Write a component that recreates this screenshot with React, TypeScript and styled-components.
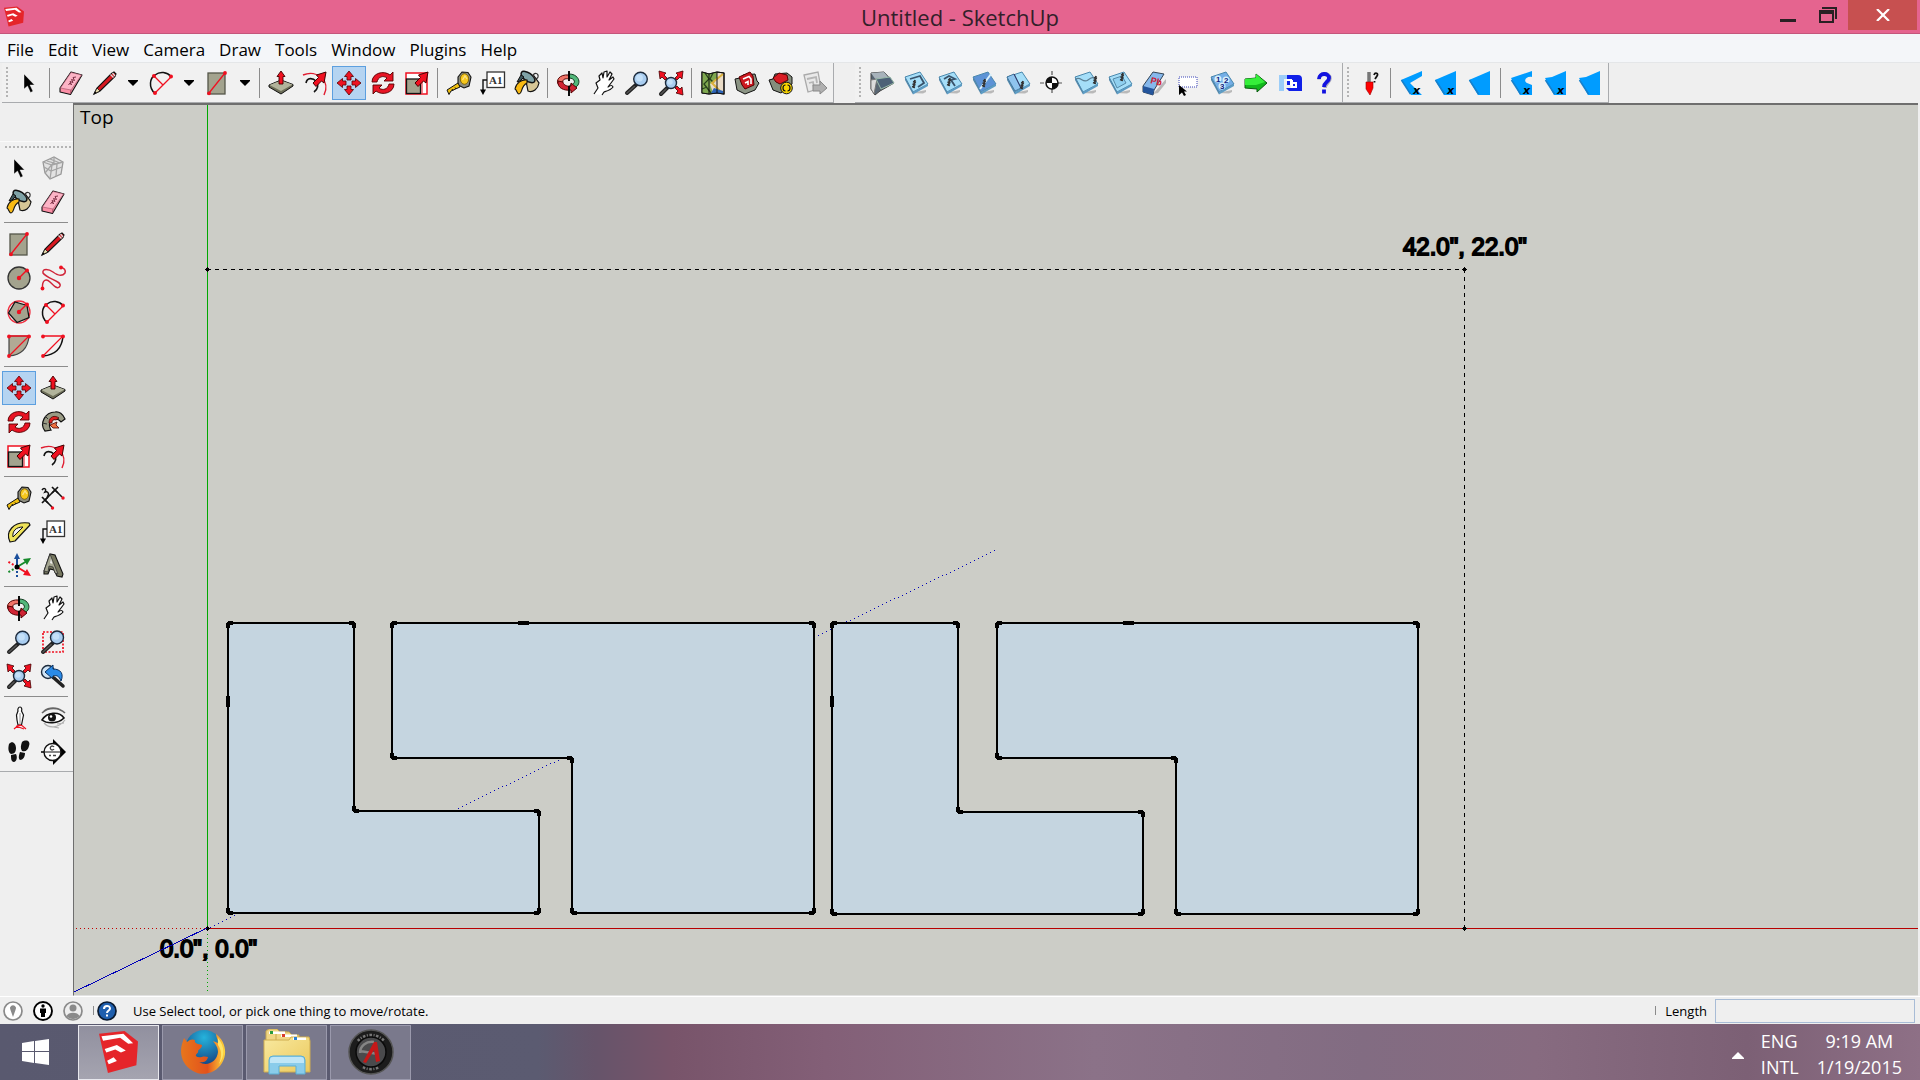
import React, { ReactNode } from "react";
import styled, { createGlobalStyle } from "styled-components";

const GlobalStyle = createGlobalStyle`
  * { box-sizing: border-box; }
  body { margin: 0; overflow: hidden; }
  button { font: inherit; color: inherit; border: 0; background: none; padding: 0; margin: 0; }
`;

const INK = "#111";
const RED = "#f01020";
const STONE = "#a3a38e";

/* ---------- drawings for the tool buttons, all on a 24 x 24 grid ---------- */

const lens = (cx: number, cy: number, r: number, hx: number, hy: number) => (
  <>
    <path d={`M${cx - r * 0.6} ${cy + r * 0.8}L${hx} ${hy}`} stroke="#222" strokeWidth="4" strokeLinecap="round" />
    <path d={`M${cx - r * 0.9} ${cy + r * 1.1}L${hx} ${hy}`} stroke="#555" strokeWidth="1.5" strokeLinecap="round" />
    <circle cx={cx} cy={cy} r={r} fill="#a9cdf0" stroke="#1c2a3c" strokeWidth="1.4" />
    <circle cx={cx - 1} cy={cy - 1} r={r * 0.5} fill="#c4e0f8" />
  </>
);

const bigArrow = <path d="M23 1L13.500 4L15.500 6.500L10 12L13 15.500L18.500 10L21 12Z" fill={RED} stroke="#400" strokeWidth="1" />;

const slab = (fill: string, detail: ReactNode) => (
  <>
    <path d="M7 22L22 19V21L19 22.500Z" fill="#b9b9b9" />
    <path d="M1 6L16 1L24 13L9 21Z" fill={fill} stroke="#4a88ad" strokeWidth="1" strokeLinejoin="round" />
    <path d="M1 6L9 21L9 23.500L1 9Z" fill="#4f86aa" />
    <path d="M9 21L24 13V15L9 23.500Z" fill="#5d9cc4" />
    {detail}
  </>
);
const screw = (x: number, y: number) => (
  <path d={`M${x} ${y}l-1.500 8M${x - 2} ${y + 1.5}l3 1M${x - 2.500} ${y + 4}l3 1M${x - 3} ${y + 6.5}l3 1`} stroke="#333" strokeWidth="1.8" fill="none" />
);
const SKY = "#a5def8";

const boldX = (
  <text x="13" y="23" fontFamily="'DejaVu Sans', sans-serif" fontWeight="bold" fontStyle="italic" fontSize="11" fill="#000">x</text>
);
const wedge = (d: string, x: boolean) => (
  <>
    <path d={d} fill="#009cff" />
    <path d="M1.500 9L10.500 23" stroke="#1580cc" strokeWidth="1.6" />
    {x && boldX}
  </>
);
const zoomArrows = (
  <path
    d="M0 0L7 2L5 4L8 7L6 9L3 6L1 8ZM24 0L17 2L19 4L16 7L18 9L21 6L23 8ZM24 24L17 22L19 20L16 17L18 15L21 18L23 16Z"
    fill={RED}
    stroke="#400"
    strokeWidth=".8"
  />
);
const sketchMark = (
  <>
    <path d="M0 1.500L15.700 0L24 6L23 19.500L5.500 24Z" fill="#e5252a" />
    <path d="M1.500 3L15 1.500L21 7L18 7.300L13 3.800L2.500 5.500ZM3.500 10.300L11 8L16.500 11.200L13.500 12.300L10 10.600L4.500 12.300ZM5 17L9 15L11 17.200L6 19Z" fill="#fff" />
  </>
);
const cross4 = "M12 0L16.500 5.500H14V9H10V5.500H7.500ZM12 24L16.500 18.500H14V15H10V18.500H7.500ZM0 12L5.500 7.500V10H9V14H5.500V16.500ZM24 12L18.500 7.500V10H15V14H18.500V16.500Z";

const DRAWINGS = {
  select: <path d="M7 3V18L10.500 15L13.500 21.500L16 20.300L13 14H17.500Z" fill="#000" stroke="#fff" strokeWidth=".4" />,
  eraser: (
    <>
      <path d="M1 17L12 1L23 4L11.500 23.500L1 21Z" fill="#fb8fa6" stroke={INK} strokeWidth="1.1" strokeLinejoin="round" />
      <path d="M1.500 17L12 1.500L22.500 4L12 19Z" fill="#fcb4c6" stroke="#a05064" strokeWidth=".6" />
      <path d="M12 19L11.500 23" stroke="#a05064" />
      <path d="M9.500 14L11 12L12.500 14L11 10.500L14 11.500L12.500 8.500L15.500 9.500L14 6.500L17 6" stroke="#7c3045" fill="none" />
    </>
  ),
  pencil: (
    <>
      <path d="M1 23L4 17L18.500 2.500L21 1L23 3L22 5.500L7 20Z" fill="#d81820" stroke={INK} strokeWidth="1.100" />
      <path d="M1 23L4 17L7 20Z" fill="#eadfb0" stroke={INK} strokeWidth=".8" />
      <path d="M1 23L2 20.500L3.500 21.800Z" fill="#000" />
      <path d="M17.500 3.500L20.500 6.500M19.500 2L22 5" stroke="#ddd" strokeWidth="1.200" />
    </>
  ),
  arc: (
    <>
      <path d="M6 22.500C-1 16 1 7 6 4C11 0 18 1 22 5.500" fill="none" stroke={INK} strokeWidth="1.500" />
      <path d="M5 5L14 14M6 22L22 6" stroke={RED} strokeWidth="1.300" />
      <g fill={RED}><circle cx="5" cy="5" r="2" /><circle cx="22" cy="5.500" r="2" /><circle cx="6" cy="22" r="2" /></g>
    </>
  ),
  rect: (
    <>
      <rect x="3" y="2" width="17" height="21" fill={STONE} stroke="#55564a" strokeWidth="1.300" />
      <path d="M4 22L20 2" stroke={RED} strokeWidth="1.300" />
      <circle cx="4" cy="22.300" r="1.900" fill={RED} /><circle cx="20" cy="2" r="1.900" fill={RED} />
    </>
  ),
  circle: (
    <>
      <circle cx="12" cy="12" r="11" fill={STONE} stroke="#333" strokeWidth="1.300" />
      <path d="M12 12L20 4" stroke={RED} strokeWidth="1.500" />
      <circle cx="12" cy="12" r="2.200" fill={RED} /><circle cx="20" cy="4.500" r="2" fill={RED} />
    </>
  ),
  polygon: (
    <>
      <circle cx="12" cy="12" r="11" fill="none" stroke="#f03040" strokeWidth="1.300" />
      <path d="M1.500 13L8 2L20 5.500L22 17.500L10 22.500Z" fill={STONE} stroke={INK} strokeWidth="1.300" />
      <path d="M12 12L20 4" stroke={RED} strokeWidth="1.500" />
      <circle cx="12" cy="12" r="2.200" fill={RED} /><circle cx="20" cy="4.500" r="2" fill={RED} />
    </>
  ),
  freehand: (
    <>
      <path d="M1.500 22C1 14 5 12 9 16C13 20 17 24 19 20C21 15 6 13 2 7C1 2 8 3 12 6C16 9 21 11 24 7C25 4 23 2 20 1.500" fill="none" stroke="#d02438" strokeWidth="1.500" />
      <circle cx="1.500" cy="22.500" r="1.900" fill={RED} /><circle cx="20" cy="1.500" r="1.900" fill={RED} />
    </>
  ),
  pie: (
    <>
      <path d="M2 2H22C21 14 14 21 2 22Z" fill="#b1aa95" stroke="#444" strokeWidth="1.200" />
      <path d="M2 2H22L2 22" fill="none" stroke={RED} strokeWidth="1.300" />
      <g fill={RED}><circle cx="2" cy="2.500" r="1.900" /><circle cx="22" cy="2.500" r="1.900" /><circle cx="2" cy="22" r="1.900" /></g>
    </>
  ),
  arc2: (
    <>
      <path d="M22 2C21 14 14 21 2 22" fill="none" stroke={INK} strokeWidth="1.500" />
      <path d="M2 2H22L2 22" fill="none" stroke={RED} strokeWidth="1.300" />
      <g fill={RED}><circle cx="2" cy="2.500" r="1.900" /><circle cx="22" cy="2.500" r="1.900" /><circle cx="2" cy="22" r="1.900" /></g>
    </>
  ),
  pushpull: (
    <>
      <path d="M0 14L12 9L24 13.500V15L12 23L0 16Z" fill="#6d6e58" stroke={INK} strokeWidth="1" />
      <path d="M0.500 14L12 9.500L23.500 13.500L12 20Z" fill="#b2b49c" />
      <path d="M12 0L16 5.500H14V13H10V5.500H8Z" fill={RED} stroke="#400" strokeWidth=".9" />
    </>
  ),
  offset: (
    <>
      <path d="M0 4C14-2 28 10 21 24" fill="none" stroke="#e01c30" strokeWidth="1.500" />
      <path d="M3 12C4 6 10 7 13 10C16 14 15 18 11 21" fill="none" stroke={INK} strokeWidth="1.600" />
      {bigArrow}
    </>
  ),
  move: <path d={cross4} fill="#ee1322" stroke="#500" strokeWidth=".8" />,
  rotate: (
    <>
      <path d="M1 11C1 2 13-1 19 4L22 1V10H13L16 7C12 4 7 6 6 11ZM23 13C23 22 11 25 5 20L2 23V14H11L8 17C12 20 17 18 18 13Z" fill="#e81424" stroke="#500" strokeWidth=".9" />
    </>
  ),
  scale: (
    <>
      <rect x="1" y="2" width="21" height="21" fill="#fff" stroke={RED} strokeWidth="1.500" />
      <path d="M17 9V22" stroke={RED} strokeWidth="1" />
      <rect x="1.500" y="8" width="14" height="14.500" fill={STONE} stroke={INK} strokeWidth="1.300" />
      {bigArrow}
    </>
  ),
  tape: (
    <>
      <path d="M11 6L15 1L21 1.500L24 6L22 15L17 17L11 14Z" fill="#8d8d80" stroke={INK} strokeWidth="1.100" />
      <ellipse cx="17.500" cy="8" rx="4.200" ry="5.300" fill="#f6c71c" stroke="#6e5600" strokeWidth=".8" />
      <path d="M15.500 9L18 5L20 8" fill="none" stroke="#fbe38a" strokeWidth="1.300" />
      <path d="M11 12L13 16L4 20L2 23.500L0 19Z" fill="#f0c010" stroke={INK} strokeWidth="1" />
      <path d="M5 18L6 20M8 16.500L9 18" stroke={INK} />
    </>
  ),
  label: (
    <>
      <rect x="6" y="1" width="17.500" height="15.500" fill="#fff" stroke="#333" strokeWidth="1.300" />
      <path d="M6 9H2V20" fill="none" stroke={INK} strokeWidth="1.400" />
      <path d="M-1 18.500H5L2 24Z" fill="#000" />
      <text x="8" y="13" fontFamily="'Liberation Serif', serif" fontWeight="bold" fontSize="11" fill="#333">A1</text>
    </>
  ),
  bucket: (
    <>
      <path d="M11 10L19 5L24 12C23 18 18 22 13 20Z" fill="#d7c796" stroke={INK} strokeWidth="1.200" />
      <ellipse cx="13" cy="6" rx="8" ry="4" transform="rotate(35 13 6)" fill="#7fa2a6" stroke={INK} strokeWidth="1.500" />
      <path d="M18 5C19 1 24 2 23 6C22 9 19 7 18 5Z" fill="none" stroke="#333" strokeWidth="1.200" />
      <path d="M12 9C7 8 1 12 0 18C2 19 2 23 4 23C8 22 5 16 12 12Z" fill="#f8ba14" stroke={INK} strokeWidth="1.100" />
      <path d="M6 4L2 11L5 10L9 6Z" fill="#3c5459" stroke={INK} />
    </>
  ),
  orbit: (
    <>
      <path d="M12 3C24 3 26 17 13 18V14C20 13 18 7 12 7Z" fill="#52b77a" stroke="#113a1e" strokeWidth="1" />
      <path d="M12 4C2 3-2 10 2 14L6 11C5 9 8 7 12 8Z" fill="#f07468" stroke="#500" strokeWidth="1" />
      <path d="M1 10C0 17 7 20 14 19V22L20 17L14 12V15C9 16 6 13 6 11Z" fill="#d02434" stroke="#500" strokeWidth="1" />
      <path d="M12 0V10M12 15V25" stroke="#000" strokeWidth="1.900" />
    </>
  ),
  hand: (
    <path d="M3 23L7 17L5 12L9 9L8 5L11 2L12 7L13 1L16 0L16 6L19 1L21 3L18 9L22 6L23 8L17 16C20 14 21 14 22 16C20 19 16 20 13 21L11 24" fill="#fff" stroke={INK} strokeWidth="1.200" strokeLinejoin="round" />
  ),
  zoom: lens(15.5, 8, 6.800, 2, 22),
  zoomExtents: <>{lens(12, 12, 5.500, 2, 23)}{zoomArrows}</>,
  zoomWindow: (
    <>
      <rect x="2" y="2" width="20" height="20" fill="none" stroke={RED} strokeWidth="1.700" strokeDasharray="2 1.500" />
      {lens(16, 7.500, 6.500, 2, 22)}
    </>
  ),
  zoomPrev: (
    <>
      <circle cx="7" cy="8" r="6.500" fill="#cfe4f6" stroke="#1c2a3c" strokeWidth="1.400" />
      <path d="M4 8L12 1V5C20 5 23 10 20 17C18 12 16 11 12 12V15Z" fill="#2a8be8" stroke="#0a3060" strokeWidth="1" />
      <path d="M13 14L22 22" stroke="#222" strokeWidth="3.500" strokeLinecap="round" />
    </>
  ),
  map: (
    <>
      <path d="M1 1L8 3L16 1L23 2V23L16 22L8 23L1 22Z" fill="#eadcc8" stroke={INK} strokeWidth="1.200" />
      <path d="M1 1L8 3L16 1V7L9 13L12 22L8 23L1 22Z" fill="#7fa850" />
      <path d="M4 2L8 8L3 13L10 22M12 2L9 8L13 12M1 18L6 16" fill="none" stroke="#28431c" strokeWidth="1.300" />
      <path d="M22 3L11 12L19 20" fill="none" stroke="#dbb23c" strokeWidth="2" />
      <path d="M10 22L13 17L22 20V23Z" fill="#2c64b8" />
      <path d="M1 1L8 3L16 1L23 2V23L16 22L8 23L1 22ZM16 1V22M8 3V23" fill="none" stroke={INK} strokeWidth="1" />
    </>
  ),
  warehouse: (
    <>
      <path d="M0 8L5 7L8 4L20 3L22 10L24 12L20 19L10 23L2 19Z" fill="#8b9484" stroke={INK} />
      <path d="M4 6L15 1L18 5L19 14L10 18L7 14Z" fill="#cc1820" stroke="#500" />
      <path d="M8 8L14 5.500L16 8L16 13M10 12L13 10.500V14" fill="none" stroke="#fff" strokeWidth="1.600" />
    </>
  ),
  extensions: (
    <>
      <path d="M0 9L4 8L6 3L18 2L23 6L23 13L12 22L4 19Z" fill="#858d7c" stroke={INK} />
      <path d="M4 7L10 2L18 4L19 9L11 13L7 11Z" fill="#d81c24" stroke="#500" />
      <circle cx="17.500" cy="17" r="5.800" fill="#f8d400" stroke={INK} strokeWidth="1" />
      <path d="M16.500 14A2.500 3 0 1 0 16.500 20M18.500 14A2.500 3 0 1 1 18.500 20" fill="none" stroke={INK} strokeWidth="1.200" />
    </>
  ),
  layout: (
    <>
      <path d="M1 4L15 1L18 17L5 21Z" fill="#e9e9e9" stroke="#aaa" strokeWidth="1.300" />
      <path d="M4 8L13 6L14 12M6 12L10 11L11 17" fill="none" stroke="#b5b5b5" strokeWidth="1.800" />
      <path d="M10 14H17V10L24 17L17 23V20H10Z" fill="#b0b0b0" stroke="#888" />
    </>
  ),
  component: (
    <>
      <path d="M2 6L13 1L22 6L20 18L9 23L4 17Z" fill="#e2e2e2" stroke="#999" strokeWidth="1.300" />
      <path d="M2 6L11 9L22 6M11 9L9 23M6 5L16 8L15 20M9 3L19 7M3 11L10 15L21 11M13 1L13 6L4 17" fill="none" stroke="#a5a5a5" strokeWidth="1.300" />
    </>
  ),
  followme: (
    <>
      <path d="M4 21C-2 14 4 2 14 2C18 1 22 4 24 9L20 12C17 8 12 8 9 12C8 15 8 17 10 20Z" fill="#9a9b85" stroke={INK} strokeWidth="1.200" />
      <path d="M8 13C8 6 14 5 18 8L15 10C12 9 11 11 11 13Z" fill="#e02020" stroke="#400" strokeWidth=".8" />
      <path d="M9 15L16 12L15 15L18 18L12 18Z" fill="#f07040" stroke="#400" strokeWidth=".8" />
      <path d="M4 6L7 9M1 13L6 14" stroke="#333" />
    </>
  ),
  dimension: (
    <>
      <path d="M4 14L14 4M4 14L11 21M14 4L21 11" stroke={INK} strokeWidth="1.500" />
      <path d="M1 11L7 17M1 17L7 11M11 1L17 7M11 7L17 1" stroke={INK} strokeWidth="1.700" />
      <path d="M1 4C3 1 6 3 4 6C7 5 9 8 6 11" fill="none" stroke={INK} strokeWidth="1.500" />
      <circle cx="11.500" cy="22" r="1.700" fill={RED} /><circle cx="22" cy="12" r="1.700" fill={RED} />
    </>
  ),
  protractor: (
    <>
      <path d="M3 22C-2 12 6 1 22 3L23 5L8 21Z" fill="#efe35a" stroke={INK} strokeWidth="1.200" strokeLinejoin="round" />
      <path d="M6 17C5 11 9 7 16 7Z" fill="#f0f0f0" stroke={INK} strokeWidth="1" strokeLinejoin="round" />
    </>
  ),
  axes: (
    <>
      <path d="M10 13V3" stroke="#1b4f9c" strokeWidth="2" /><path d="M7 5L10 -1L13 5Z" fill="#1b4f9c" />
      <path d="M10 13L20 7" stroke="#178a2c" strokeWidth="2" /><path d="M16 5L24 4L20 11Z" fill="#178a2c" />
      <path d="M10 13L20 19" stroke={RED} strokeWidth="2" /><path d="M16 21L24 22L20 15Z" fill={RED} />
      <path d="M10 13V24" stroke="#1b4f9c" strokeWidth="2" strokeDasharray="2 2" />
      <path d="M10 13L0 19" stroke="#178a2c" strokeWidth="2" strokeDasharray="2 2" />
      <path d="M10 13L0 7" stroke={RED} strokeWidth="2" strokeDasharray="2 2" />
      <circle cx="10" cy="13" r="2.500" fill="#000" />
    </>
  ),
  text3d: (
    <>
      <path d="M3 17L9 0L14 1L22 20L21 23L16 22L13 16L9 15L7 20L3 20Z" fill="#777860" stroke={INK} strokeWidth="1.100" />
      <path d="M3 17L9 0L17 20L14 19L12 13L8 12L7 18Z" fill="#a5a691" stroke="#333" strokeWidth=".8" />
      <path d="M9 9L10 5L11.500 10Z" fill="#f0f0f0" />
    </>
  ),
  camera: (
    <>
      <path d="M13 1C15 1 15 4 14.500 5L16.500 9L15.500 14L14.500 19H11L10 14L9.500 9L11 5C10.500 4 11 1 13 1Z" fill="#fff" stroke={INK} strokeWidth="1.200" />
      <path d="M13 7V18" stroke="#777" strokeWidth=".8" />
      <path d="M13 18V20M7 23L11 19.500H15L19 23M9 20L17 23" stroke={RED} strokeWidth="1.200" fill="none" />
    </>
  ),
  eye: (
    <>
      <path d="M1 7C7 1 18 1 24 7M3 5C8 1 16 1 21 5" fill="none" stroke="#666" strokeWidth="1.600" />
      <path d="M1 14C6 6 18 5 23 12C17 18 6 18 1 14Z" fill="#fff" stroke={INK} strokeWidth="1.600" />
      <circle cx="11" cy="11.500" r="4" fill="#111" /><circle cx="10" cy="10.500" r="1.300" fill="#fff" />
      <path d="M3 17C8 23 18 22 24 14M7 20L18 22M16 18L23 17" fill="none" stroke="#b0b0b0" strokeWidth="1.200" />
    </>
  ),
  walk: (
    <>
      <path d="M2 4C5 0 9 3 9 8C9 11 8 14 4 14C1 12 1 8 2 4ZM4 15L9 14C11 18 9 22 7 22C4 22 4 18 4 15Z" fill="#111" />
      <path d="M15 2C19-1 24 1 22 6C21 10 19 12 15 11C13 8 14 5 15 2ZM13 12L18 13C18 17 16 20 13 20C11 18 12 15 13 12Z" fill="#111" />
    </>
  ),
  section: (
    <>
      <path d="M12-1L25 12L12 25Z" fill="#000" />
      <path d="M0 12H24" stroke="#000" strokeWidth="1.500" />
      <circle cx="11.500" cy="12" r="8.500" fill="#fff" stroke={INK} strokeWidth="1.400" />
      <path d="M3 12H20" stroke={INK} />
      <path d="M13 7A2 2 0 1 0 13 9M8 15.500H10M12 15.500H15" fill="none" stroke="#444" strokeWidth="1.300" />
    </>
  ),
  softScene: (
    <>
      <path d="M1 2L14 1L24 12L10 20L5 24L1 18Z" fill="#596673" stroke="#444" />
      <path d="M1 2L14 1L18 6L6 9Z" fill="#a8b3bb" />
      <path d="M1 9L7 8L4 23L1 18Z" fill="#dcdcdc" stroke="#777" />
      <path d="M6 8L20 6L24 12L11 18Z" fill="#4d6177" stroke="#9ba" />
    </>
  ),
  slab1: slab(SKY, <><path d="M6 8L16 5L20 12L14 16" fill="none" stroke="#39536b" strokeWidth="1.800" />{screw(11, 9)}</>),
  slab2: slab(SKY, <><path d="M6 8L11 5L17 8L13 9L17 15" fill="none" stroke="#39536b" strokeWidth="1.800" />{screw(12, 7)}</>),
  slab3: slab("#5d93d6", <><path d="M8 18L19 3" stroke="#d8f0fc" strokeWidth="2" />{screw(13, 8)}</>),
  slab4: slab(SKY, <><path d="M1 6L8 3L15 17L9 20Z" fill="#8fc4ee" stroke="#46789c" /><path d="M8 3L15 17" stroke="#336" />{screw(17, 10)}</>),
  target: (
    <>
      <path d="M12 0V24M0 12H24" stroke="#555" strokeWidth="1.200" strokeDasharray="4 2" />
      <circle cx="12" cy="12" r="6" fill="#fff" stroke={INK} strokeWidth="1.500" />
      <path d="M12 12V6A6 6 0 0 0 6 12ZM12 12V18A6 6 0 0 0 18 12Z" fill="#111" />
    </>
  ),
  slab5: slab(SKY, <><path d="M2 8C7 5 9 13 14 9S20 7 22 8" fill="none" stroke="#5b7e93" strokeWidth="1.200" />{screw(22, 5)}</>),
  slab6: slab(SKY, <><path d="M5 8L14 5L18 12L9 17Z" fill="#8fd0f0" stroke="#558aa8" />{screw(15, 2)}</>),
  pbErase: (
    <>
      <path d="M11 23L24 8V12L16 22Z" fill="#b8b8b8" />
      <path d="M1 15L11 1L22 3L12 19L11 24L1 21Z" fill="#86b8ec" stroke="#345" />
      <path d="M1 15L12 18L11 24L1 21Z" fill="#24559c" />
      <text x="8" y="12" transform="rotate(14 8 12)" fontFamily="'Liberation Sans', sans-serif" fontWeight="bold" fontSize="9" fill="#d01830">Pb</text>
    </>
  ),
  marquee: (
    <>
      <rect x="3" y="6" width="18" height="10" fill="#fff" stroke="#3a44b8" strokeDasharray="1 1" />
      <path d="M3 14V24L6 21.500L8 25L10 24L8 20.500H11Z" fill="#000" />
    </>
  ),
  numbers: slab("#74aee6", (
    <g fontFamily="'Liberation Sans', sans-serif" fontWeight="bold" fontSize="8" fill="#102080">
      <circle cx="8" cy="8" r="3.500" fill="#d5f0fc" /><circle cx="16" cy="9" r="3.500" fill="#d5f0fc" /><circle cx="12" cy="15" r="3.500" fill="#d5f0fc" />
      <text x="6" y="11">1</text><text x="14" y="12">2</text><text x="10" y="18">3</text>
    </g>
  )),
  go: (
    <>
      <path d="M1 8L12 7V3L23 12L13 21V18L1 17Z" fill="#12b81c" stroke="#0b5a10" />
      <path d="M1 8L12 7V3L21 11L12 14H1Z" fill="#35ef3a" />
    </>
  ),
  pbLogo: (
    <>
      <path d="M1 4H14V8H6V20H1Z" fill="#9ccdf8" />
      <path d="M9 4H20Q24 4 24 8V20H11L8 17H14V14H9Z" fill="#1020e8" />
      <path d="M8 9H13V14M14 9V16H18V12H14" fill="none" stroke="#fff" strokeWidth="2" />
    </>
  ),
  help: (
    <>
      <path d="M7 8.500C7 1 18 1 18 7.500C18 12 13 12 13 17" fill="none" stroke="#aab" strokeWidth="3.500" />
      <path d="M7 8C7 1.500 17 1.500 17 7C17 11 12 11 12 16M12 18.500V22.500" fill="none" stroke="#1212e0" strokeWidth="3.800" />
    </>
  ),
  tuner: (
    <>
      <path d="M11 1V12" stroke="#777" strokeWidth="3.500" />
      <path d="M8 11H15V17L12 24L8 18Z" fill="#f00" stroke="#900" strokeWidth=".6" />
      <path d="M16 4C17 1 21 2 19 5L17 8M16.500 10V11.500" fill="none" stroke="#111" strokeWidth="1.800" />
    </>
  ),
  wedge1: wedge("M1 9L22 0V5L10 12L22 24H11Z", true),
  wedge2: wedge("M1 9L22 0V24H10Z", true),
  wedge3: wedge("M1 9L22 0V24H10Z", false),
  wedge4: wedge("M1 7L22 0V6C16 5 13 10 17 12L22 14V24H10Z", true),
  wedge5: wedge("M1 7L8 6L22 0V24H10Z", true),
  wedge6: wedge("M1 7L8 6L22 0V24H10Z", false),
};
type Tool = keyof typeof DRAWINGS;

/* ---------- shell ---------- */

const Window = styled.div`
  display: flex;
  flex-direction: column;
  height: 100vh;
  background: #efefef;
  color: #000;
  font-family: "Open Sans", "Noto Sans", sans-serif;
`;

const TitleBar = styled.header`
  display: grid;
  grid-template-columns: 1fr auto 1fr;
  height: 34px;
  background: #e5648f;
  border-bottom: 1px solid #c4567c;
`;
const AppLogo = styled.svg`
  width: 20px;
  height: 21px;
  margin: 6px 0 0 4px;
`;
const Title = styled.h1`
  margin: 0;
  font-size: 22px;
  line-height: 34px;
  font-weight: 400;
  color: #33202a;
`;
const WindowButtons = styled.div`
  display: flex;
  justify-content: flex-end;
  padding-right: 3px;
`;
const WindowButton = styled.button<{ $close?: boolean }>`
  display: grid;
  place-items: center;
  width: ${(p) => (p.$close ? 69 : 40)}px;
  height: 30px;
  background: ${(p) => (p.$close ? "#c75050" : "transparent")};
`;

const MenuBar = styled.nav`
  display: flex;
  gap: 14px;
  height: 28px;
  padding-left: 7px;
  background: #f4f6f9;
  font-size: 17px;
  line-height: 32px;
`;

const ToolbarRow = styled.div`
  display: flex;
  height: 41px;
  padding-left: 2px;
  border-top: 1px solid #e4e6e8;
`;
const Toolbar = styled.div<{ $gap?: number }>`
  display: flex;
  align-items: center;
  margin-right: ${(p) => p.$gap ?? 0}px;
  padding-right: 1px;
  background: #f1f1f1;
  border: solid #a9abae;
  border-width: 0 1px 1px 0;
`;
const Grip = styled.span<{ $across?: boolean }>`
  flex: none;
  width: ${(p) => (p.$across ? "66px" : "2px")};
  height: ${(p) => (p.$across ? "2px" : "32px")};
  margin: ${(p) => (p.$across ? "4px 0 3px 3px" : "0 4px 0 4px")};
  background: repeating-linear-gradient(${(p) => (p.$across ? "90deg" : "180deg")}, #b4b4b4 0 2px, transparent 2px 4px);
`;
const ToolButton = styled.button<{ $on?: boolean }>`
  flex: none;
  display: grid;
  place-items: center;
  width: 34px;
  height: 34px;
  border: 1px solid ${(p) => (p.$on ? "#5c9fdf" : "transparent")};
  background: ${(p) => (p.$on ? "#b5d4f1" : "transparent")};
`;
const Drop = styled.button`
  display: grid;
  place-items: center;
  width: 22px;
  height: 34px;
`;
const Rule = styled.span<{ $across?: boolean }>`
  flex: none;
  background: #8c8c8c;
  width: ${(p) => (p.$across ? "64px" : "1px")};
  height: ${(p) => (p.$across ? "1px" : "30px")};
  margin: ${(p) => (p.$across ? "3px 0 4px 2px" : "0 4px 0 3px")};
`;
const ToolSvg = styled.svg`
  width: 24px;
  height: 24px;
  overflow: visible;
  fill: none;
`;

const Workspace = styled.main`
  display: flex;
  flex: 1;
  min-height: 0;
`;
const Side = styled.aside`
  flex: none;
  width: 73px;
  padding-top: 38px;
`;
const Palette = styled.div`
  display: flex;
  flex-direction: column;
  padding: 0 0 2px 2px;
  background: #f1f1f1;
  border-top: 1px solid #fafafa;
  border-bottom: 1px solid #a9abae;
`;
const Pair = styled.div`
  display: flex;
`;
const Viewport = styled.section`
  position: relative;
  flex: 1;
  min-width: 0;
  margin-right: 2px;
  border-top: 2px solid #6e6e6e;
  border-left: 1px solid #6e6e6e;
  border-bottom: 1px solid #e2e2e2;
  background: #cccdc7;
`;
const ViewName = styled.span`
  position: absolute;
  left: 6px;
  top: 0;
  font-size: 19px;
  line-height: 24px;
`;
const Model = styled.svg`
  display: block;
  width: 100%;
  height: 100%;
`;

const StatusBar = styled.footer`
  display: flex;
  align-items: center;
  height: 28px;
  padding: 0 5px 0 3px;
  border-top: 1px solid #fff;
  font-size: 13px;
`;
const StatusButton = styled.button`
  width: 20px;
  height: 20px;
  margin-right: 10px;
`;
const Tick = styled.span`
  width: 1px;
  height: 9px;
  background: #8a8a8a;
`;
const HelpButton = styled(StatusButton)`
  margin: 0 16px 0 3px;
`;
const Hint = styled.span`
  flex: 1;
`;
const LengthLabel = styled.label`
  display: flex;
  align-items: center;
  gap: 8px;
  padding-left: 9px;
`;
const LengthInput = styled.input`
  width: 200px;
  height: 24px;
  border: 1px solid #a8bcd6;
  background: #efefef;
`;

const Taskbar = styled.footer`
  display: flex;
  align-items: center;
  gap: 3px;
  height: 56px;
  padding-right: 18px;
  color: #fff;
  font-size: 18px;
  line-height: 26px;
  background: linear-gradient(90deg, #59596f 0%, #5b5b71 28%, #66546a 31%, #78546a 35%, #835f77 43%, #8b7288 57%, #826c82 71%, #876b80 80%, #7c6075 91%, #8e7086 100%);
`;
const StartButton = styled.button`
  width: 75px;
  height: 54px;
  padding-right: 4px;
  display: grid;
  place-items: center;
`;
const TaskButton = styled.button<{ $on?: boolean }>`
  display: grid;
  place-items: center;
  width: 81px;
  height: 55px;
  border: 1px solid ${(p) => (p.$on ? "#e8e8ee" : "#9a99ac")};
  background: ${(p) => (p.$on ? "linear-gradient(#91909f, #a5a4b0)" : "#7a798c")};
`;
const Spacer = styled.span`
  flex: 1;
`;
const TrayButton = styled.button`
  margin-right: 14px;
`;
const TrayText = styled.div<{ $center?: boolean }>`
  display: flex;
  flex-direction: column;
  padding-top: 3px;
  margin-right: ${(p) => (p.$center ? 0 : 15)}px;
  text-align: ${(p) => (p.$center ? "center" : "left")};
`;

/* ---------- parts ---------- */

function ToolBtn({ tool, on }: { tool: Tool; on?: boolean }) {
  return (
    <ToolButton $on={on} aria-label={tool} aria-pressed={on}>
      <ToolSvg viewBox="0 0 24 24">{DRAWINGS[tool]}</ToolSvg>
    </ToolButton>
  );
}

type Slot = Tool | "|" | "v";

function ToolStrip({ slots, active, gap }: { slots: Slot[]; active?: Tool; gap?: number }) {
  return (
    <Toolbar $gap={gap} role="toolbar">
      <Grip />
      {slots.map((s, i) =>
        s === "|" ? (
          <Rule key={i} />
        ) : s === "v" ? (
          <Drop key={i} aria-label="more">
            <svg width="10" height="6"><path d="M0 0H10V1L5 6L0 1Z" /></svg>
          </Drop>
        ) : (
          <ToolBtn key={i} tool={s} on={s === active} />
        ),
      )}
    </Toolbar>
  );
}

const MENUS = ["File", "Edit", "View", "Camera", "Draw", "Tools", "Window", "Plugins", "Help"];
const MAIN_TOOLS: Slot[] = [
  "select", "|", "eraser", "pencil", "v", "arc", "v", "rect", "v", "|",
  "pushpull", "offset", "move", "rotate", "scale", "|", "tape", "label", "bucket", "|",
  "orbit", "hand", "zoom", "zoomExtents", "|", "map", "warehouse", "extensions", "layout",
];
const BOARD_TOOLS: Slot[] = [
  "softScene", "slab1", "slab2", "slab3", "slab4", "target", "slab5", "slab6", "pbErase", "marquee", "numbers", "go", "pbLogo", "help",
];
const WEDGE_TOOLS: Slot[] = ["tuner", "|", "wedge1", "wedge2", "wedge3", "|", "wedge4", "wedge5", "wedge6"];
const PALETTE: ([Tool, Tool] | null)[] = [
  ["select", "component"], ["bucket", "eraser"], null,
  ["rect", "pencil"], ["circle", "freehand"], ["polygon", "arc"], ["pie", "arc2"], null,
  ["move", "pushpull"], ["rotate", "followme"], ["scale", "offset"], null,
  ["tape", "dimension"], ["protractor", "label"], ["axes", "text3d"], null,
  ["orbit", "hand"], ["zoom", "zoomWindow"], ["zoomExtents", "zoomPrev"], null,
  ["camera", "eye"], ["walk", "section"],
];

type Point = [number, number];
const FACES: Point[][] = [
  [[228, 623], [354, 623], [354, 811], [539, 811], [539, 913], [228, 913]],
  [[392, 623], [814, 623], [814, 913], [572, 913], [572, 758], [392, 758]],
  [[832, 623], [958, 623], [958, 812], [1143, 812], [1143, 914], [832, 914]],
  [[997, 623], [1418, 623], [1418, 914], [1176, 914], [1176, 758], [997, 758]],
];

function Face({ points }: { points: Point[] }) {
  const n = points.length;
  return (
    <g>
      <polygon points={points.map((p) => p.join(",")).join(" ")} fill="#c5d5e0" stroke="#000" strokeWidth="2" />
      {points.map(([x, y], i) => {
        const around = [points[(i + 1) % n], points[(i + n - 1) % n]];
        return around.map(([ax, ay], j) => (
          <line key={`${i}-${j}`} x1={x} y1={y} x2={x + Math.sign(ax - x) * 5} y2={y + Math.sign(ay - y) * 5} stroke="#000" strokeWidth="4" strokeLinecap="butt" />
        ));
      })}
    </g>
  );
}

/* single-pixel dots every 4px along the hidden part of the blue axis */
const AXIS_DOTS = Array.from({ length: 197 }, (_, i) => {
  const x = 210 + i * 4;
  return `M${x} ${Math.round(928 - ((x - 207) * 378) / 788)}h1v1h-1z`;
}).join("");

function Drawing() {
  return (
    <Model role="img" aria-label="Model">
      <g transform="translate(-74 -105)" shapeRendering="crispEdges">
        <line x1="207.500" y1="105" x2="207.500" y2="928" stroke="#00a800" />
        <line x1="207.500" y1="930" x2="207.500" y2="993" stroke="#00a800" strokeDasharray="1 3" />
        <line x1="76" y1="928.500" x2="207" y2="928.500" stroke="#c00000" strokeDasharray="1 3" />
        <line x1="207" y1="928.500" x2="4000" y2="928.500" stroke="#b80000" />
        <path d={AXIS_DOTS} fill="#0000b8" />
        {FACES.map((f, i) => <Face key={i} points={f} />)}
        <g stroke="#000" strokeWidth="4">
          <path d="M518 623H529M1123 623H1134M228 696V707M832 696V707" />
        </g>
        <g stroke="#000" strokeDasharray="4 4">
          <line x1="207" y1="269.500" x2="1464" y2="269.500" />
          <line x1="1464.500" y1="269" x2="1464.500" y2="928" />
        </g>
        <path d="M205 269.500H210M207.500 267V272M1462 269.500H1467M1464.500 267V272M205 928.500H210M207.500 926V931M1462 928.500H1467M1464.500 926V931" stroke="#000" />
        <path d="M206 268H209V271H206ZM1463 268H1466V271H1463ZM206 927H209V930H206ZM1463 927H1466V930H1463Z" fill="#000" />
        <g fontFamily="'Liberation Sans', sans-serif" fontSize="24" stroke="#000" strokeWidth="1.800" shapeRendering="auto">
          <text x="1403" y="255">42.0", 22.0"</text>
          <text x="160" y="957">0.0", 0.0"</text>
        </g>
        <line x1="74" y1="992" x2="207" y2="928" stroke="#0000b8" />
      </g>
    </Model>
  );
}

export default function App() {
  return (
    <Window>
      <GlobalStyle />
      <TitleBar>
        <AppLogo viewBox="0 0 24 24">{sketchMark}</AppLogo>
        <Title>Untitled - SketchUp</Title>
        <WindowButtons>
          <WindowButton aria-label="Minimize">
            <svg width="16" height="16"><path d="M0 12H16V15H0Z" fill="#2a2024" /></svg>
          </WindowButton>
          <WindowButton aria-label="Restore">
            <svg width="18" height="16" fill="none" stroke="#2a2024" strokeWidth="2">
              <path d="M3 1H17V12" /><path d="M1 4H14V15H1ZM1 6H14" />
            </svg>
          </WindowButton>
          <WindowButton $close aria-label="Close">
            <svg width="14" height="12" stroke="#fff" strokeWidth="2.200"><path d="M1 0L13 12M13 0L1 12" /></svg>
          </WindowButton>
        </WindowButtons>
      </TitleBar>

      <MenuBar>
        {MENUS.map((m) => <button key={m}>{m}</button>)}
      </MenuBar>

      <ToolbarRow>
        <ToolStrip slots={MAIN_TOOLS} active="move" gap={21} />
        <ToolStrip slots={BOARD_TOOLS} />
        <ToolStrip slots={WEDGE_TOOLS} />
      </ToolbarRow>

      <Workspace>
        <Side>
          <Palette role="toolbar">
            <Grip $across />
            {PALETTE.map((row, i) =>
              row ? (
                <Pair key={i}>
                  <ToolBtn tool={row[0]} on={row[0] === "move"} />
                  <ToolBtn tool={row[1]} />
                </Pair>
              ) : (
                <Rule $across key={i} />
              ),
            )}
          </Palette>
        </Side>
        <Viewport>
          <Drawing />
          <ViewName>Top</ViewName>
        </Viewport>
      </Workspace>

      <StatusBar>
        <StatusButton aria-label="Location">
          <svg width="20" height="20"><circle cx="10" cy="10" r="9" fill="#fff" stroke="#8a8a8a" strokeWidth="1.700" /><path d="M10 16L7.500 9A3 3 0 1 1 12.500 9Z" fill="#8a8a8a" /></svg>
        </StatusButton>
        <StatusButton aria-label="Credits">
          <svg width="20" height="20"><circle cx="10" cy="10" r="9" fill="#fff" stroke="#000" strokeWidth="1.900" /><circle cx="10" cy="5" r="1.700" /><path d="M7 7.500H13V12H12V16H8V12H7Z" /></svg>
        </StatusButton>
        <StatusButton aria-label="Sign in">
          <svg width="20" height="20"><circle cx="10" cy="10" r="9" fill="#eee" stroke="#8a8a8a" strokeWidth="1.700" /><circle cx="10" cy="7" r="3.500" fill="#8a8a8a" /><path d="M3.500 15C5 10.500 15 10.500 16.500 15C13 19 7 19 3.500 15Z" fill="#8a8a8a" /></svg>
        </StatusButton>
        <Tick />
        <HelpButton aria-label="Help">
          <svg width="20" height="20"><circle cx="10" cy="10" r="9" fill="#1f5fae" stroke="#0a1a30" strokeWidth="1.700" /><path d="M7 8C7 4 13 4 13 7.500C13 9.500 10 9.500 10 12M10 13.500V15.500" fill="none" stroke="#fff" strokeWidth="2" /></svg>
        </HelpButton>
        <Hint>Use Select tool, or pick one thing to move/rotate.</Hint>
        <Tick />
        <LengthLabel>
          Length
          <LengthInput type="text" />
        </LengthLabel>
      </StatusBar>

      <Taskbar>
        <StartButton aria-label="Start">
          <svg width="27" height="26" fill="#fff"><path d="M0 4L12 2V12H0ZM13 2L27 0V12H13ZM0 13H12V24L0 22ZM13 13H27V26L13 24Z" /></svg>
        </StartButton>
        <TaskButton $on aria-label="SketchUp">
          <svg width="39" height="42" viewBox="0 0 24 24" preserveAspectRatio="none">{sketchMark}</svg>
        </TaskButton>
        <TaskButton aria-label="Firefox">
          <svg width="46" height="46" viewBox="0 0 46 46">
            <defs>
              <radialGradient id="globe" cx=".5" cy=".2" r=".8"><stop offset="0" stopColor="#25b3dc" /><stop offset="1" stopColor="#123a7c" /></radialGradient>
              <linearGradient id="fox" x1="0" y1="0" x2="1" y2="0"><stop offset="0" stopColor="#e8761c" /><stop offset=".6" stopColor="#e2521c" /><stop offset="1" stopColor="#ffd83c" /></linearGradient>
            </defs>
            <circle cx="24" cy="20" r="19" fill="url(#globe)" />
            <path d="M36 5C45 12 48 24 42 34C36 44 23 48 13 42C3 37-1 26 2 15L4 9L7 13C10 10 13 10 15 11C14 14 17 15 22 16C22 19 19 20 18 22C19 24 15 25 16 27C19 30 23 26 28 28C27 33 22 34 19 33C27 38 37 33 38 23C38 17 34 14 33 12L38 14C38 10 36 8 36 5Z" fill="url(#fox)" />
            <path d="M38 9C45 17 45 28 39 35C42 27 42 22 38 16Z" fill="#ffe566" />
          </svg>
        </TaskButton>
        <TaskButton aria-label="File Explorer">
          <svg width="48" height="46" viewBox="0 0 48 46">
            <defs>
              <linearGradient id="folder" x1="0" y1="0" x2="1" y2="1"><stop offset="0" stopColor="#f8e9a0" /><stop offset="1" stopColor="#ecc95c" /></linearGradient>
            </defs>
            <path d="M3 12V2L6 0H14L17 3H24V12Z" fill="#f0d684" stroke="#c9a84e" />
            <path d="M13 12V5L16 3H26L29 6H36V14Z" fill="#f0d684" stroke="#c9a84e" />
            <path d="M6 2.500H22V5H6ZM18 5.500H34V8H18ZM31 9H43V12H31Z" fill="#fff" />
            <path d="M7 2H10V5H7Z" fill="#2a9c3c" /><path d="M19 5H22V8H19Z" fill="#d83c2c" />
            <path d="M1 11H26L28 8H46L47 12V43H1Z" fill="url(#folder)" stroke="#d0ae50" />
            <path d="M30 8.500H43V11H30Z" fill="#fff" /><path d="M31 8H34V11H31Z" fill="#2a80d0" />
            <path d="M6 45V31Q6 27 10 27H38Q42 27 42 31V45H33V37H16V45Z" fill="#8accea" stroke="#5aaed4" />
            <path d="M7 31Q7 28 10 28H38Q41 28 41 31V34H7Z" fill="#c0e6f6" />
          </svg>
        </TaskButton>
        <TaskButton aria-label="Artist">
          <svg width="46" height="46" viewBox="0 0 46 46">
            <circle cx="23" cy="23" r="22" fill="#1c1c1c" stroke="#555" strokeWidth="1.500" />
            <path d="M10 12A17.500 17.500 0 0 1 36 12M15 38A17.500 17.500 0 0 0 31 38" fill="none" stroke="#777" strokeWidth="3" strokeDasharray="2.500 1.500 1 1.500" />
            <circle cx="23" cy="23" r="15" fill="#4a4a4c" stroke="#0a0a0a" strokeWidth="1.500" />
            <path d="M12 24C12 17 18 12 26 13M12 22L30 25" fill="none" stroke="#858585" strokeWidth="2.500" />
            <path d="M15 33L26 13H29L32 32L28 33L26 21L18 34Z" fill="#c41818" />
          </svg>
        </TaskButton>
        <Spacer />
        <TrayButton aria-label="Show hidden icons">
          <svg width="12" height="7"><path d="M6 0L12 6V7H0V6Z" fill="#fff" /></svg>
        </TrayButton>
        <TrayText><span>ENG</span><span>INTL</span></TrayText>
        <TrayText $center><span>9:19 AM</span><span>1/19/2015</span></TrayText>
      </Taskbar>
    </Window>
  );
}
